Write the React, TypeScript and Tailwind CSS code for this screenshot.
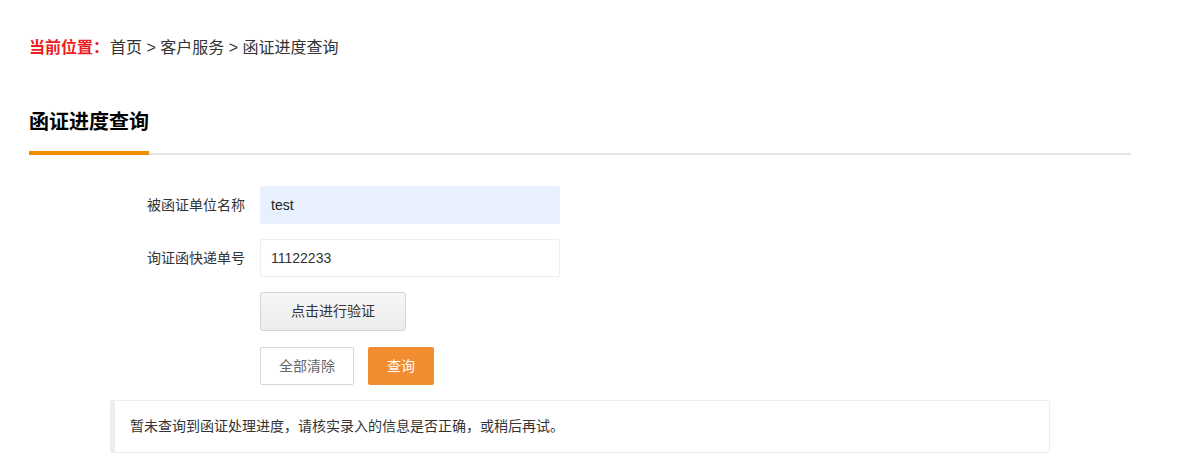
export default function App() {
  return (
    <main className="min-h-screen bg-white font-['Liberation_Sans','Noto_Sans_CJK_SC',sans-serif] text-[#333]">
      <div className="ml-[29px] w-[1102px] pt-[36px]">
        {/* Breadcrumb */}
        <div className="flex h-6 items-center text-[16px] leading-6">
          <span className="font-bold text-[#ee1d24]">当前位置：</span>
          <span className="ml-[1px]">首页 &gt; 客户服务 &gt; 函证进度查询</span>
        </div>

        {/* Title */}
        <div className="mt-[48px] border-b-2 border-[#e4e4e4]">
          <h2 className="-mb-[2px] w-[120px] border-b-4 border-[#f08c00] pb-[15px] text-[20px] leading-7 font-bold text-black">
            函证进度查询
          </h2>
        </div>

        {/* Form */}
        <form className="mt-[31px] flex flex-col gap-[15px] text-[14px]">
          <div className="flex items-center">
            <label className="w-[231px] shrink-0 pr-[15px] text-right text-[#333]">被函证单位名称</label>
            <input
              defaultValue="test"
              className="h-[38px] w-[300px] rounded-[2px] bg-[#e8f0fe] px-[11px] text-[14px] text-[#222] outline-none"
            />
          </div>
          <div className="flex items-center">
            <label className="w-[231px] shrink-0 pr-[15px] text-right text-[#333]">询证函快递单号</label>
            <input
              defaultValue="11122233"
              className="h-[38px] w-[300px] rounded-[2px] border border-[#eee] bg-white px-[10px] text-[14px] text-[#333] outline-none"
            />
          </div>
          <div className="flex pl-[231px]">
            <button
              type="button"
              className="h-[39px] w-[146px] rounded-[3px] border border-[#d4d4d4] bg-gradient-to-b from-[#f7f7f7] to-[#ececec] text-[14px] text-[#333]"
            >
              点击进行验证
            </button>
          </div>
          <div className="mt-[1px] flex gap-[14px] pl-[231px]">
            <button
              type="button"
              className="h-[38px] w-[94px] rounded-[2px] border border-[#d6d6d6] bg-white text-[14px] text-[#666]"
            >
              全部清除
            </button>
            <button
              type="button"
              className="h-[38px] w-[66px] rounded-[2px] bg-[#f28c30] text-[14px] text-white"
            >
              查询
            </button>
          </div>
        </form>

        {/* Result notice */}
        <div className="mt-[15px] ml-[81px] flex h-[53px] w-[940px] items-center rounded-[2px] border border-l-[5px] border-[#eee] pl-[15px] text-[14px] text-[#333]">
          暂未查询到函证处理进度，请核实录入的信息是否正确，或稍后再试。
        </div>
      </div>
    </main>
  );
}
